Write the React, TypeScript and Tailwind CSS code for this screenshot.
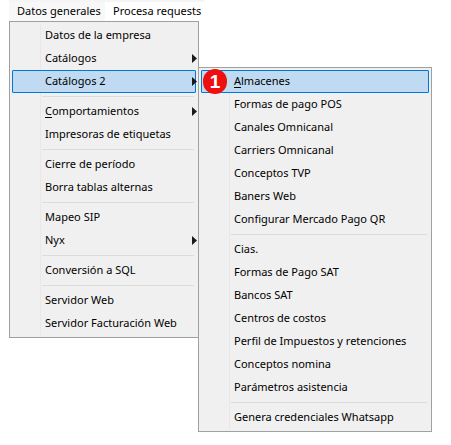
import React from "react";

type Item = { label: React.ReactNode; arrow?: boolean; active?: boolean } | "sep";

const U = ({ c }: { c: string }) => <span className="underline underline-offset-2">{c}</span>;

const left: Item[] = [
  { label: "Datos de la empresa" },
  { label: "Catálogos", arrow: true },
  { label: "Catálogos 2", arrow: true, active: true },
  "sep",
  { label: <><U c="C" />omportamientos</>, arrow: true },
  { label: "Impresoras de etiquetas" },
  "sep",
  { label: "Cierre de período" },
  { label: "Borra tablas alternas" },
  "sep",
  { label: "Mapeo SIP" },
  { label: "Nyx", arrow: true },
  "sep",
  { label: "Conversión a SQL" },
  "sep",
  { label: "Servidor Web" },
  { label: "Servidor Facturación Web" },
];

const right: Item[] = [
  { label: <><U c="A" />lmacenes</>, active: true },
  { label: "Formas de pago POS" },
  { label: "Canales Omnicanal" },
  { label: "Carriers Omnicanal" },
  { label: "Conceptos TVP" },
  { label: "Baners Web" },
  { label: "Configurar Mercado Pago QR" },
  "sep",
  { label: "Cias." },
  { label: "Formas de Pago SAT" },
  { label: "Bancos SAT" },
  { label: "Centros de costos" },
  { label: "Perfil de Impuestos y retenciones" },
  { label: "Conceptos nomina" },
  { label: "Parámetros asistencia" },
  "sep",
  { label: "Genera credenciales Whatsapp" },
];

function Menu({ items, className }: { items: Item[]; className: string }) {
  return (
    <div className={`border border-[#a0a0a0] bg-[#f0f0f0] p-0.5 ${className}`}>
      <div className="relative flex flex-col">
        <div className="absolute left-[28px] top-0 bottom-0 w-px bg-[#e8e8e8]" />
        {items.map((it, i) =>
          it === "sep" ? (
            <div key={i} className="ml-[30px] mr-0.5 flex h-[7px] items-center">
              <div className="h-px w-full bg-[#dcdcdc]" />
            </div>
          ) : (
            <div
              key={i}
              className={`relative flex h-[23px] items-center border pl-[32px] ${
                it.active ? "rounded-[1px] border-[#0078d7] bg-[#bfdaf1]" : "border-transparent"
              }`}
            >
              <span className="whitespace-nowrap pb-[3px] leading-none">{it.label}</span>
              {it.arrow && (
                <svg className="absolute right-[-2px] top-[6px]" width="5" height="9" viewBox="0 0 5 9">
                  <path d="M0 0L5 4.5L0 9Z" fill="#1a1a1a" />
                </svg>
              )}
            </div>
          )
        )}
      </div>
    </div>
  );
}

export default function App() {
  return (
    <div className="relative h-[445px] w-[451px] overflow-hidden bg-white font-['Noto_Sans',sans-serif] text-[11px] text-black">
      <div className="ml-[9px] h-[2px] w-[195px] bg-[#f5f5f5]" />
      <div className="ml-[9px] flex h-[19px] w-[195px] items-center whitespace-nowrap">
        <span className="flex h-full w-[96px] items-center bg-[#f8f8f8] pl-[8px]">Datos generales</span>
        <span className="pl-[8px]">Procesa requests</span>
      </div>
      <Menu items={left} className="ml-[9px] w-[190px]" />
      <Menu items={right} className="absolute left-[198px] top-[67px] w-[234px]" />
      <div className="absolute left-[203px] top-[69px] flex h-[25px] w-[24px] items-center justify-center rounded-full bg-[#f00f0f] font-['Liberation_Sans',sans-serif] text-[19px] leading-none font-bold text-white">
        1
      </div>
    </div>
  );
}
